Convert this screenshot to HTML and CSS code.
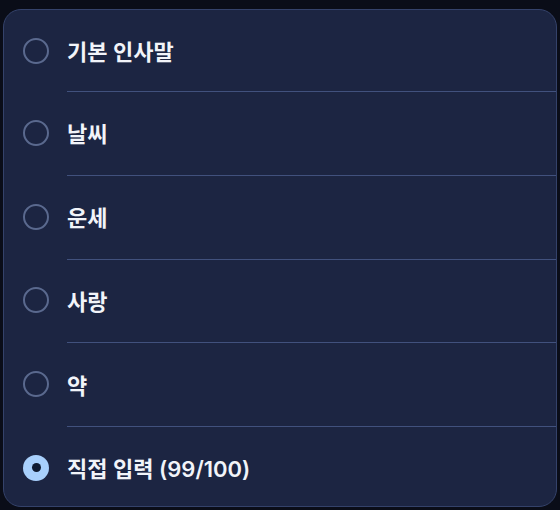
FILE: index.html
```html
<!DOCTYPE html>
<html lang="ko">
<head>
<meta charset="utf-8">
<link rel="stylesheet" href="styles.css">
</head>
<body>
<div class="card">
  <div class="list">
    <div class="row first"><span class="radio"></span><div class="label">기본 인사말</div></div>
    <div class="row"><span class="radio"></span><div class="label">날씨</div></div>
    <div class="row"><span class="radio"></span><div class="label">운세</div></div>
    <div class="row"><span class="radio"></span><div class="label">사랑</div></div>
    <div class="row"><span class="radio"></span><div class="label">약</div></div>
    <div class="row"><span class="radio checked"></span><div class="label">직접 입력 (99/100)</div></div>
  </div>
</div>
</body>
</html>
```

FILE: styles.css
```css
html, body {
  margin: 0;
  padding: 0;
}
body {
  background: #0a0d18;
  width: 560px;
  height: 510px;
  overflow: hidden;
  font-family: "Inter", "Noto Sans CJK KR", sans-serif;
}
.card {
  box-sizing: border-box;
  margin: 9px 3px 0 3px;
  height: 498px;
  background: #1c2542;
  border: 1px solid #34426a;
  border-radius: 18px;
  overflow: hidden;
}
.list {
  display: flex;
  flex-direction: column;
}
.row {
  display: flex;
  align-items: center;
  height: 83.75px;
  flex-shrink: 0;
}
.row.first {
  height: 81px;
}
.radio {
  box-sizing: border-box;
  flex-shrink: 0;
  width: 26px;
  height: 26px;
  margin: 0 18px 0 19px;
  border: 2px solid #5a698e;
  border-radius: 50%;
  display: flex;
  align-items: center;
  justify-content: center;
}
.radio.checked {
  border: none;
  background: #a8d0fc;
}
.radio.checked::after {
  content: "";
  width: 9px;
  height: 9px;
  border-radius: 50%;
  background: #0f1b31;
}
.label {
  flex: 1;
  align-self: stretch;
  display: flex;
  align-items: center;
  padding-bottom: 2px;
  border-top: 1px solid #41517d;
  color: #f2f4f9;
  font-size: 22px;
  font-weight: 600;
}
.row.first .label {
  border-top: none;
}
```
